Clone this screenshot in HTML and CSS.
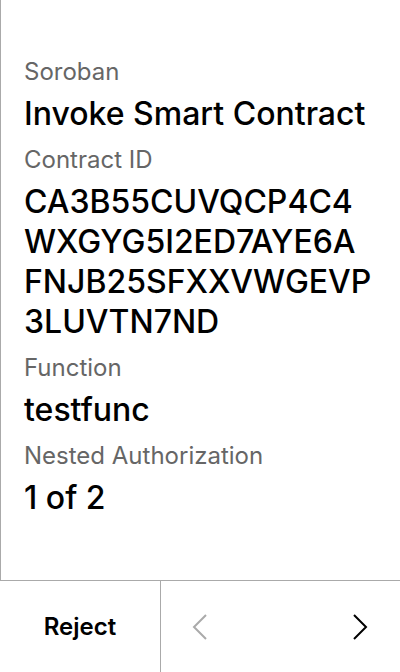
FILE: index.html
```html
<!DOCTYPE html>
<html lang="en">
<head>
<meta charset="utf-8">
<title>Invoke Smart Contract</title>
<link rel="stylesheet" href="styles.css">
</head>
<body>
<div class="screen">
  <main class="content">
    <div class="group">
      <div class="label">Soroban</div>
      <div class="value">Invoke Smart Contract</div>
    </div>
    <div class="group">
      <div class="label">Contract ID</div>
      <div class="value">CA3B55CUVQCP4C4<br>WXGYG5I2ED7AYE6A<br>FNJB25SFXXVWGEVP<br>3LUVTN7ND</div>
    </div>
    <div class="group">
      <div class="label">Function</div>
      <div class="value">testfunc</div>
    </div>
    <div class="group">
      <div class="label">Nested Authorization</div>
      <div class="value">1 of 2</div>
    </div>
  </main>
  <footer class="footer">
    <button class="reject">Reject</button>
    <div class="nav">
      <svg class="chev chev-prev" width="16" height="26" viewBox="0 0 16 26"><polyline points="14,1 2,13 14,25" fill="none" stroke="currentColor" stroke-width="2"/></svg>
      <svg class="chev chev-next" width="16" height="26" viewBox="0 0 16 26"><polyline points="2,1 14,13 2,25" fill="none" stroke="currentColor" stroke-width="2"/></svg>
    </div>
  </footer>
</div>
</body>
</html>
```

FILE: styles.css
```css
html, body {
  margin: 0;
  padding: 0;
  background: #fff;
}
body {
  font-family: Inter, "Noto Sans", sans-serif;
  color: #000;
  width: 400px;
  height: 672px;
  overflow: hidden;
}
.screen {
  display: flex;
  flex-direction: column;
  width: 400px;
  height: 672px;
}
.content {
  flex: 1;
  box-sizing: border-box;
  border-left: 1px solid #aaaaaa;
  padding: 56px 8px 0 23px;
  display: flex;
  flex-direction: column;
  gap: 10px;
}
.group {
  display: flex;
  flex-direction: column;
  gap: 6px;
}
.label {
  font-size: 24px;
  line-height: 32px;
  color: #666666;
}
.value {
  font-size: 32px;
  line-height: 40px;
  font-weight: 500;
  white-space: nowrap;
}
.footer {
  height: 91px;
  border-top: 1px solid #aaaaaa;
  display: flex;
}
.reject {
  width: 161px;
  border: 0;
  border-right: 1px solid #aaaaaa;
  background: none;
  padding: 0;
  font-family: Inter, "Noto Sans", sans-serif;
  font-size: 24px;
  font-weight: 600;
  color: #000;
}
.nav {
  flex: 1;
  display: flex;
  align-items: center;
  justify-content: space-between;
  padding: 0 32px 0 31px;
}
.chev-prev { color: #aaaaaa; }
.chev-next { color: #000; }
```
